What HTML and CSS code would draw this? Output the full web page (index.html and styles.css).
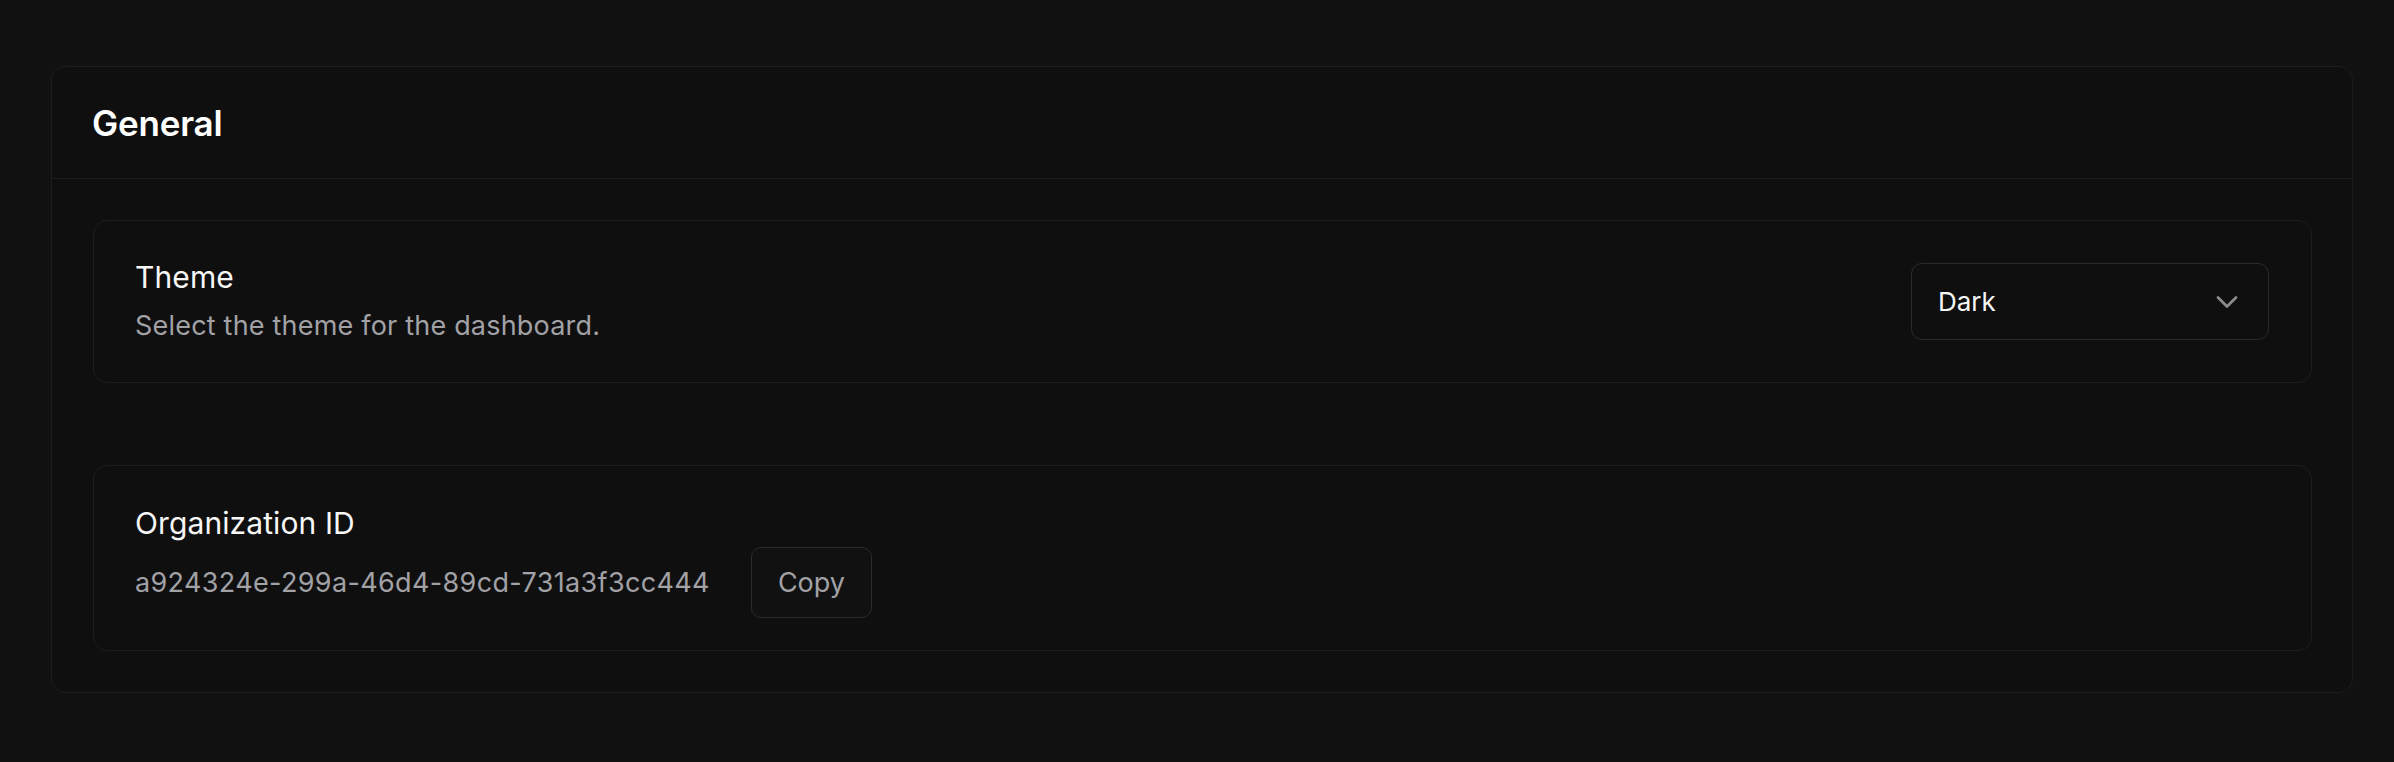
FILE: index.html
```html
<!DOCTYPE html>
<html lang="en">
<head>
<meta charset="utf-8">
<title>General</title>
<link rel="stylesheet" href="styles.css">
</head>
<body>
<main class="page">
  <section class="panel">
    <header class="panel-header">
      <h1 class="panel-title">General</h1>
    </header>
    <div class="panel-body">
      <div class="setting setting-row">
        <div class="setting-text">
          <div class="setting-label">Theme</div>
          <div class="setting-desc">Select the theme for the dashboard.</div>
        </div>
        <div class="select">
          <span class="select-value">Dark</span>
          <svg class="select-chevron" viewBox="0 0 24 24" fill="none" stroke="currentColor" stroke-width="1.8" stroke-linecap="round" stroke-linejoin="round"><polyline points="6 9 12 15 18 9"></polyline></svg>
        </div>
      </div>
      <div class="setting setting-org">
        <div class="setting-label org-label">Organization ID</div>
        <div class="id-row">
          <span class="org-id">a924324e-299a-46d4-89cd-731a3f3cc444</span>
          <button class="copy-btn" type="button">Copy</button>
        </div>
      </div>
    </div>
  </section>
</main>
</body>
</html>
```
FILE: styles.css
```css
* { box-sizing: border-box; }
html, body {
  margin: 0;
  background: #111111;
  font-family: Inter, "Noto Sans", "Liberation Sans", sans-serif;
  color: #fafafa;
}
.page {
  padding: 66px 41px 0 51px;
}
.panel {
  border: 1px solid #1d1d1d;
  border-radius: 14px;
  background: #0f0f0f;
}
.panel-header {
  height: 112px;
  display: flex;
  align-items: center;
  padding: 0 40px;
  border-bottom: 1px solid #1d1d1d;
}
.panel-title {
  margin: 0;
  font-size: 35px;
  font-weight: 600;
  letter-spacing: -0.2px;
  color: #ffffff;
}
.panel-body {
  padding: 41px 40px 41px 41px;
  display: flex;
  flex-direction: column;
  gap: 82px;
}
.setting {
  border: 1px solid #1d1d1d;
  border-radius: 14px;
  background: #0f0f0f;
}
.setting-row {
  display: flex;
  align-items: center;
  justify-content: space-between;
  padding: 41px 42px 41px 41px;
}
.setting-label {
  font-size: 30px;
  line-height: 31px;
  color: #f7f7f7;
  letter-spacing: 0.1px;
}
.setting-desc {
  margin-top: 18px;
  font-size: 27px;
  line-height: 30px;
  letter-spacing: 0.2px;
  color: #a1a1a6;
}
.select {
  width: 358px;
  height: 77px;
  border: 1px solid #2b2b2b;
  border-radius: 11px;
  background: #0f0f0f;
  display: flex;
  align-items: center;
  justify-content: space-between;
  padding: 0 23px 0 26px;
}
.select-value {
  font-size: 26px;
  color: #f7f7f7;
}
.select-chevron {
  width: 36px;
  height: 36px;
  color: #8c8c8c;
}
.setting-org {
  padding: 41px 41px 32px 41px;
}
.org-label {
  line-height: 36px;
  margin-top: -2px;
}
.id-row {
  margin-top: 6px;
  display: flex;
  align-items: center;
  gap: 41px;
}
.org-id {
  font-size: 27px;
  letter-spacing: 0.35px;
  color: #a1a1a6;
}
.copy-btn {
  width: 121px;
  height: 71px;
  border: 1px solid #2b2b2b;
  border-radius: 10px;
  background: #111111;
  color: #a1a1a6;
  font-family: inherit;
  font-size: 27px;
  padding: 0;
}
```
